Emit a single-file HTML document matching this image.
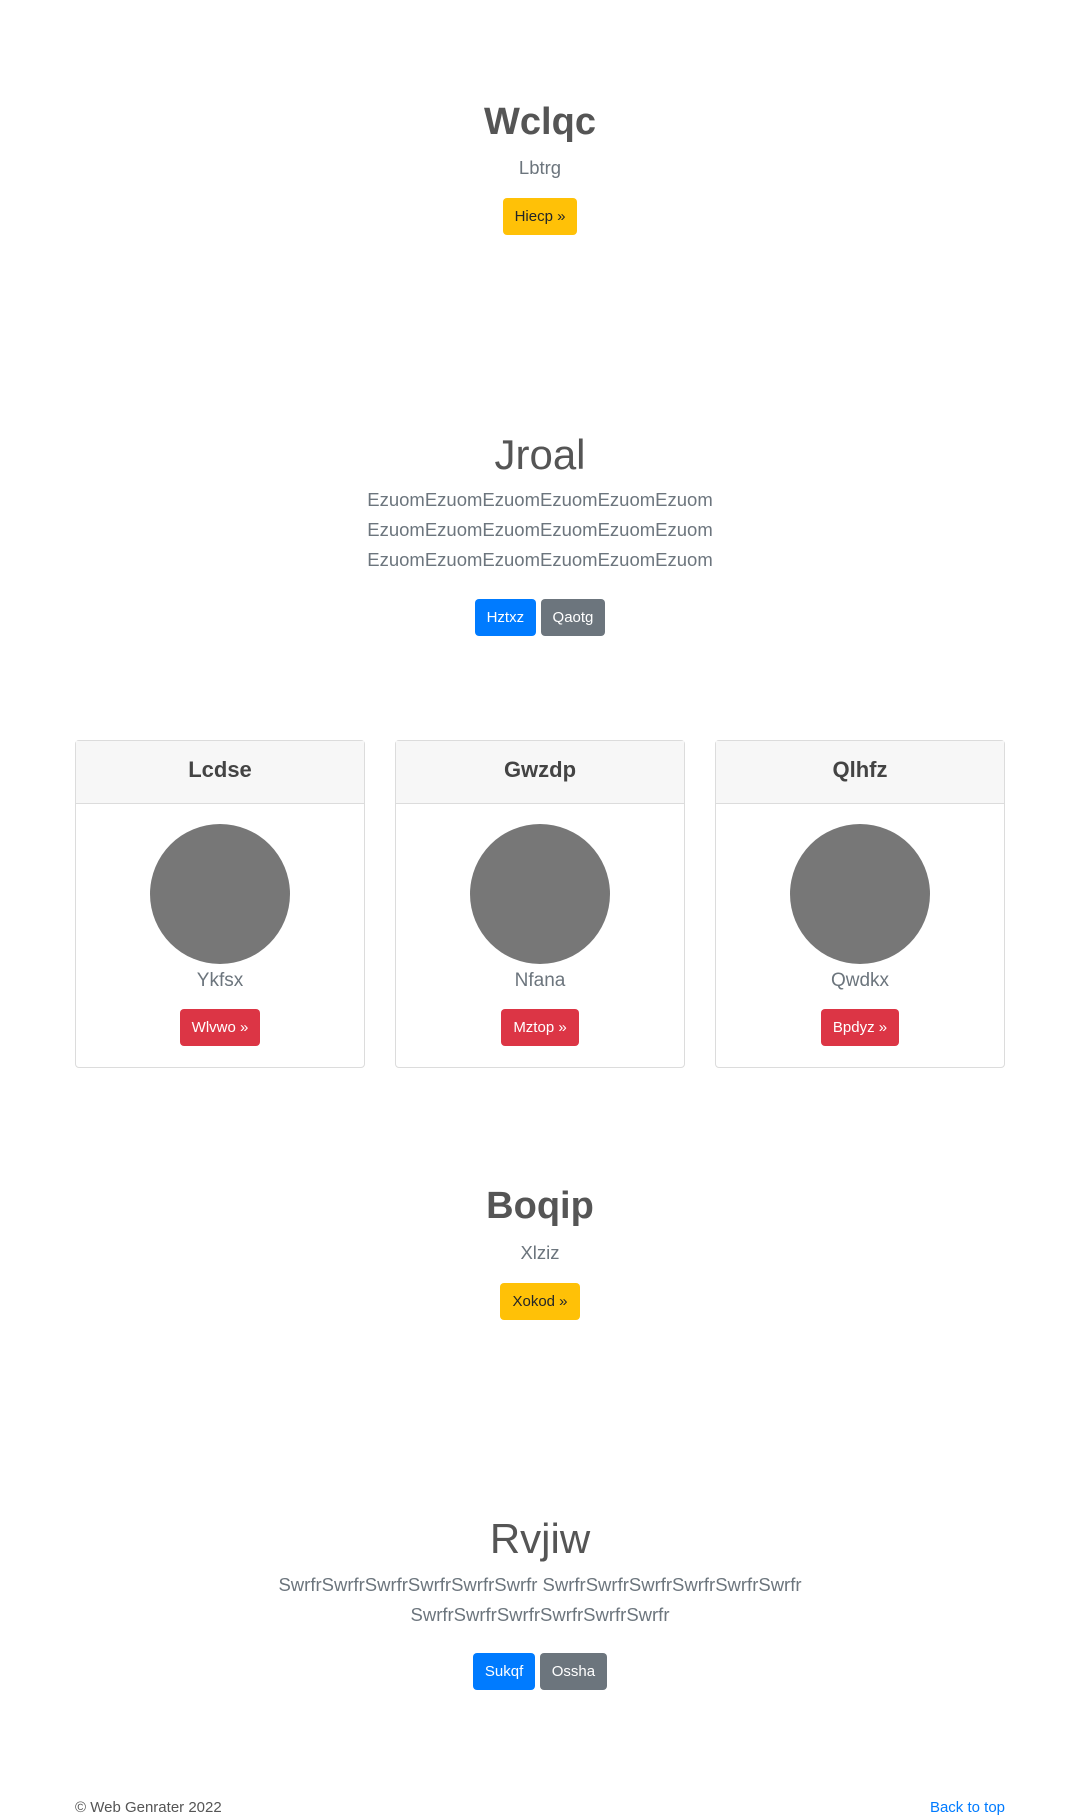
<!DOCTYPE html>
<html><head><meta charset="utf-8"><style>
*{box-sizing:border-box;margin:0;padding:0}
body{width:1080px;height:1818px;background:#fff;font-family:"Liberation Sans",sans-serif;color:#555;position:relative;overflow:hidden}
.c{position:absolute;left:0;width:1080px;text-align:center}
.h1{font-size:38px;font-weight:bold;color:#555;line-height:48px}
.disp{font-size:42px;font-weight:300;color:#555;line-height:50px}
.lead{font-size:18.5px;font-weight:300;color:#6c757d;line-height:30px}
.btn{display:inline-block;border-radius:4px;font-size:15px;line-height:37px;height:37px;padding:0 12px;vertical-align:top}
.y{background:#ffc107;color:#212529}
.b{background:#007bff;color:#fff}
.g{background:#6c757d;color:#fff}
.r{background:#dc3545;color:#fff}
.card{position:absolute;top:740px;width:290px;height:328px;border:1px solid #dcdcdc;border-radius:4px;text-align:center}
.card .hd{height:63px;background:#f7f7f7;border-bottom:1px solid #dcdcdc;font-size:22px;font-weight:bold;color:#444;line-height:58px}
.card .ci{width:140px;height:140px;border-radius:50%;background:#777;margin:20px auto 0}
.card .nm{font-size:19px;font-weight:300;color:#6c757d;line-height:30px;margin-top:2px}
.card .btn{margin-top:13px}
</style></head><body>
<div class="c h1" style="top:98px">Wclqc</div>
<div class="c lead" style="top:153px">Lbtrg</div>
<div class="c" style="top:198px"><span class="btn y">Hiecp »</span></div>

<div class="c disp" style="top:430px">Jroal</div>
<div class="c lead" style="top:485px">EzuomEzuomEzuomEzuomEzuomEzuom<br>EzuomEzuomEzuomEzuomEzuomEzuom<br>EzuomEzuomEzuomEzuomEzuomEzuom</div>
<div class="c" style="top:599px"><span class="btn b">Hztxz</span> <span class="btn g">Qaotg</span></div>

<div class="card" style="left:75px"><div class="hd">Lcdse</div><div class="ci"></div><div class="nm">Ykfsx</div><span class="btn r">Wlvwo »</span></div>
<div class="card" style="left:395px"><div class="hd">Gwzdp</div><div class="ci"></div><div class="nm">Nfana</div><span class="btn r">Mztop »</span></div>
<div class="card" style="left:715px"><div class="hd">Qlhfz</div><div class="ci"></div><div class="nm">Qwdkx</div><span class="btn r">Bpdyz »</span></div>

<div class="c h1" style="top:1182px">Boqip</div>
<div class="c lead" style="top:1238px">Xlziz</div>
<div class="c" style="top:1283px"><span class="btn y">Xokod »</span></div>

<div class="c disp" style="top:1514px">Rvjiw</div>
<div class="c lead" style="top:1570px;padding:0 270px">SwrfrSwrfrSwrfrSwrfrSwrfrSwrfr SwrfrSwrfrSwrfrSwrfrSwrfrSwrfr SwrfrSwrfrSwrfrSwrfrSwrfrSwrfr</div>
<div class="c" style="top:1653px"><span class="btn b">Sukqf</span> <span class="btn g">Ossha</span></div>

<div style="position:absolute;left:75px;top:1799px;font-size:15px;color:#555">© Web Genrater 2022</div>
<div style="position:absolute;right:75px;top:1799px;font-size:15px;color:#007bff">Back to top</div>
</body></html>
